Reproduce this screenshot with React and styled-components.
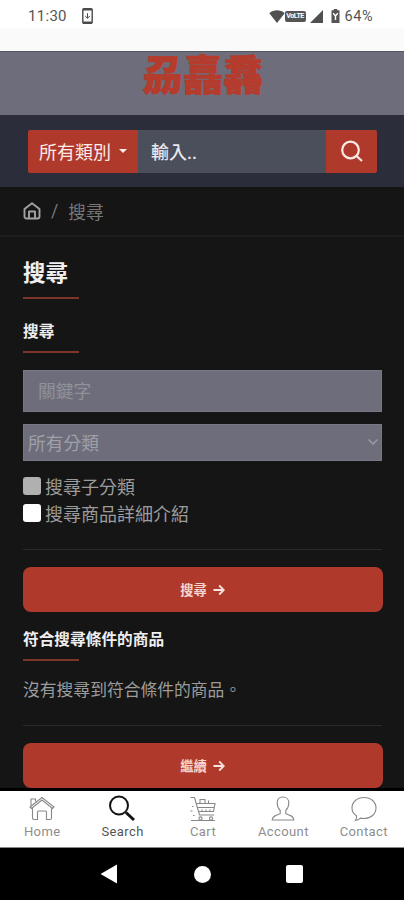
import React from 'react';
import styled, { createGlobalStyle, css } from 'styled-components';

const TABS = [
  { label: 'Home', icon: <HomeTabIcon /> },
  { label: 'Search', icon: <SearchTabIcon />, active: true },
  { label: 'Cart', icon: <CartTabIcon /> },
  { label: 'Account', icon: <AccountTabIcon /> },
  { label: 'Contact', icon: <ContactTabIcon /> },
];

function App() {
  return (
    <Screen>
      <GlobalStyle />
      <StatusBar />
      <TitleStrip />
      <LogoBar>
        <LogoText>刕嚞馫</LogoText>
      </LogoBar>
      <SearchBar>
        <CategoryButton>
          所有類別
          <Caret />
        </CategoryButton>
        <SearchField>輸入..</SearchField>
        <SearchButton aria-label="search">
          <svg width="24" height="24" viewBox="0 0 24 24" fill="none" stroke="#fbe9e6" strokeWidth="2.2">
            <circle cx="10.5" cy="10" r="8.3" />
            <path d="M16.5 16l5.5 5" />
          </svg>
        </SearchButton>
      </SearchBar>
      <Breadcrumb>
        <svg width="18" height="18" viewBox="0 0 18 18" fill="none" stroke="#a2a2a2" strokeWidth="1.9" strokeLinejoin="round">
          <path d="M1.5 7L9 1.2 16.5 7v7.5a2 2 0 0 1-2 2h-11a2 2 0 0 1-2-2z" />
          <path d="M6 16.2V9.5h6v6.7" />
        </svg>
        <Slash>/</Slash>
        <span>搜尋</span>
      </Breadcrumb>
      <Content>
        <PageTitle>搜尋</PageTitle>
        <Underline />
        <SubTitle>搜尋</SubTitle>
        <Underline />
        <KeywordField>關鍵字</KeywordField>
        <SelectField>
          所有分類
          <svg width="12" height="8" viewBox="0 0 12 8" fill="none" stroke="#a0a0a8" strokeWidth="1.3">
            <path d="M1.5 1.5L6 6l4.5-4.5" />
          </svg>
        </SelectField>
        <CheckList>
          <CheckRow>
            <CheckBox $disabled />
            搜尋子分類
          </CheckRow>
          <CheckRow>
            <CheckBox />
            搜尋商品詳細介紹
          </CheckRow>
        </CheckList>
        <Divider />
        <ActionButton>
          搜尋
          <ArrowIcon />
        </ActionButton>
        <SubTitle $result>符合搜尋條件的商品</SubTitle>
        <Underline />
        <Message>沒有搜尋到符合條件的商品。</Message>
        <Divider />
        <ActionButton>
          繼續
          <ArrowIcon />
        </ActionButton>
      </Content>
      <TabBar>
        {TABS.map(({ label, icon, active }) => (
          <Tab key={label} $active={active}>
            {icon}
            <TabLabel>{label}</TabLabel>
          </Tab>
        ))}
      </TabBar>
      <SystemNav>
        <svg width="18" height="20" viewBox="0 0 18 20" fill="#fff">
          <path d="M0.5 10L17 0.5v19z" />
        </svg>
        <NavCircle />
        <NavSquare />
      </SystemNav>
    </Screen>
  );
}

export default App;

function StatusBar() {
  return (
    <StatusRow>
      <Clock>11:30</Clock>
      <svg width="11" height="16" viewBox="0 0 11 16" fill="none" stroke="#4a4a4a">
        <rect x="0.8" y="0.8" width="9.4" height="14.4" rx="1" strokeWidth="1.4" />
        <path d="M1 1.6h9M1 14.4h9" strokeWidth="1.8" />
        <path d="M5.5 5.2v5M3.2 8l2.3 2.3L7.8 8" strokeWidth="1" />
      </svg>
      <StatusRight>
        <svg width="16" height="13" viewBox="0 0 16 13" fill="#505050">
          <path d="M8 13L0.3 3.2C4.8-0.6 11.2-0.6 15.7 3.2z" />
        </svg>
        <VolteBadge>VoLTE</VolteBadge>
        <SignalIcon width="13" height="13" viewBox="0 0 13 13" fill="#505050">
          <path d="M13 0v13H0z" />
        </SignalIcon>
        <svg width="9" height="14" viewBox="0 0 9 14">
          <path d="M2.8 0h3.4v1.3H8.5V14H0.5V1.3h2.3z" fill="#555" />
          <path d="M2.2 4.2L4.5 7l2.3-2.8M4.5 6v5" stroke="#fff" strokeWidth="1.4" fill="none" />
        </svg>
        <Battery>64%</Battery>
      </StatusRight>
    </StatusRow>
  );
}

function ArrowIcon() {
  return (
    <svg width="12" height="12" viewBox="0 0 12 12" fill="none" stroke="#fbe3df" strokeWidth="1.8">
      <path d="M0.5 6h10M6.2 1.5L10.8 6l-4.6 4.5" />
    </svg>
  );
}

function HomeTabIcon() {
  return (
    <TabIcon viewBox="0 0 28 28">
      <path d="M2 12L14 2.5 26 12l-1.5 1.5L14 5 3.5 13.5zM3 10.5V4h4.5v2.5M4.5 13.5V23q0 1.5 1.5 1.5h3.5V17q0-1 1-1h7q1 0 1 1v7.5H22q1.5 0 1.5-1.5v-9.5" />
    </TabIcon>
  );
}

function SearchTabIcon() {
  return (
    <TabIcon viewBox="0 0 28 28" $bold>
      <circle cx="10" cy="10.500" r="9" />
      <path d="M17 17.500l8 7.500" strokeWidth="3" />
    </TabIcon>
  );
}

function CartTabIcon() {
  return (
    <TabIcon viewBox="0 0 28 28">
      <path d="M1.5 2.5h4L10.500 20H25M7 8.500h19l-1.500 8H9.500M8 12.500h17.500" />
      <path d="M11 8.500v-4h5v4M19.500 8.500v-3" />
      <path d="M3 11.500h1.500M1.500 16h2M4 20.500h1.500M2 25.500h24M13 14.500v2M17 14.500v2M21 14.500v2" />
      <circle cx="11.500" cy="23.500" r="1.600" />
      <circle cx="22" cy="23.500" r="1.600" />
    </TabIcon>
  );
}

function AccountTabIcon() {
  return (
    <TabIcon viewBox="0 0 28 28">
      <path d="M14 2c-3.800 0-5.800 2.700-5.800 6 0 3.200 1.200 5.700 3 7.500v3.200c-4 1.300-8 2.300-8 6.300h21.600c0-4-4-5-8-6.300v-3.200c1.800-1.800 3-4.300 3-7.500 0-3.300-2-6-5.800-6z" />
    </TabIcon>
  );
}

function ContactTabIcon() {
  return (
    <TabIcon viewBox="0 0 28 28">
      <path d="M5.500 25.500c1-1.500 1.300-3 1-4.800C3.300 18.800 2 16.200 2 13 2 7 7 2.500 14 2.500S26 7 26 13 21 23.500 14 23.500c-1.200 0-2.400-.1-3.500-.4-1.500 1.500-3 2.200-5 2.400z" />
    </TabIcon>
  );
}

const GlobalStyle = createGlobalStyle`
  * {
    box-sizing: border-box;
  }

  body {
    margin: 0;
    background: #000;
    font-family: 'Roboto', 'Noto Sans CJK TC', sans-serif;
  }

  button {
    border: 0;
    padding: 0;
    font-family: inherit;
  }

  svg {
    display: block;
    flex-shrink: 0;
  }
`;

const flexCenter = css`
  display: flex;
  align-items: center;
  justify-content: center;
`;

const Screen = styled.div`
  display: flex;
  flex-direction: column;
  width: 404px;
  height: 900px;
  overflow: hidden;
  background: #151515;
`;

// Status bar
const StatusRow = styled.div`
  display: flex;
  align-items: center;
  height: 28px;
  padding: 4px 31px 0 28px;
  background: #fff;
  color: #555;
`;

const Clock = styled.span`
  width: 54px;
  font-size: 15px;
  letter-spacing: 0.3px;
`;

const StatusRight = styled.div`
  display: flex;
  align-items: center;
  margin-left: auto;
`;

const VolteBadge = styled.span`
  ${flexCenter};
  width: 21px;
  height: 11px;
  margin-right: 1px;
  border-radius: 2px;
  background: #555;
  color: #fff;
  font-size: 7px;
  font-weight: 700;
  letter-spacing: -0.4px;
`;

const SignalIcon = styled.svg`
  margin: 0 8px 0 3px;
`;

const Battery = styled.span`
  margin-left: 5px;
  font-size: 14.5px;
  letter-spacing: 0.5px;
`;

const TitleStrip = styled.div`
  height: 23px;
  background: #fafafa;
`;

// Header
const LogoBar = styled.header`
  display: flex;
  justify-content: center;
  height: 64px;
  border-top: 1px solid #555562;
  background: #6d6d7b;
`;

const LogoText = styled.div`
  height: 48px;
  padding-left: 2px;
  color: #b53b2c;
  font-size: 40.5px;
  font-weight: 900;
  line-height: 48px;
  -webkit-text-stroke: 0.6px #b53b2c;
`;

const SearchBar = styled.div`
  display: flex;
  height: 72px;
  padding: 15px 27px 14px 28px;
  background: #2c2d3a;
`;

const CategoryButton = styled.button`
  ${flexCenter};
  gap: 8px;
  width: 110px;
  padding-bottom: 2px;
  border-radius: 2px 0 0 2px;
  background: #af3a2c;
  color: #fdebe8;
  font-size: 18px;
`;

const Caret = styled.span`
  border: 4.5px solid transparent;
  border-top-color: #fdebe8;
  border-bottom: 0;
`;

const SearchField = styled.div`
  display: flex;
  flex: 1;
  align-items: center;
  padding: 0 0 2px 13px;
  background: #4b4f5c;
  color: #e8e8ec;
  font-size: 18px;
  font-weight: 500;
`;

const SearchButton = styled.button`
  ${flexCenter};
  width: 51px;
  border-radius: 0 2px 2px 0;
  background: #af3a2c;
`;

const Breadcrumb = styled.nav`
  display: flex;
  align-items: center;
  height: 50px;
  padding-left: 23px;
  border-bottom: 2px solid #1c1c1c;
  color: #777;
  font-size: 17.7px;
`;

const Slash = styled.span`
  margin: 0 10px;
`;

// Search form
const Content = styled.main`
  height: 551px;
  padding: 22px 22px 0 23px;
  overflow: hidden;
  color: #9c9c9c;
`;

const PageTitle = styled.h1`
  margin: 0;
  color: #efefef;
  font-size: 22.5px;
  font-weight: 700;
  line-height: 28px;
`;

const Underline = styled.div`
  width: 56px;
  height: 2px;
  margin-top: 10px;
  background: #7d3529;
`;

const SubTitle = styled.h3`
  height: 22px;
  margin: ${({ $result }) => ($result ? '15px' : '20px')} 0 0;
  color: #efefef;
  font-size: 15.7px;
  font-weight: 700;
  line-height: 25px;
`;

const Field = styled.div`
  display: flex;
  align-items: center;
  width: 359px;
  border: 1px solid #777785;
  background: #6d6d7b;
  font-size: 17.8px;
`;

const KeywordField = styled(Field)`
  height: 42px;
  margin-top: 17px;
  padding: 0 0 2px 14px;
  color: #91919a;
`;

const SelectField = styled(Field)`
  justify-content: space-between;
  height: 37px;
  margin-top: 12px;
  padding: 0 2px 2px 4px;
  color: #a0a0a8;
`;

const CheckList = styled.div`
  margin-top: 11px;
`;

const CheckRow = styled.div`
  display: flex;
  align-items: center;
  gap: 4px;
  height: 27px;
  font-size: 18px;
`;

const CheckBox = styled.span`
  width: 18px;
  height: 18px;
  border-radius: 3px;
  background: ${({ $disabled }) => ($disabled ? '#b0b0b0' : '#fff')};
`;

const Divider = styled.div`
  width: 359px;
  height: 1px;
  margin: 23px 0 17px;
  background: #2a2a2a;
`;

const ActionButton = styled.button`
  ${flexCenter};
  gap: 6px;
  width: 360px;
  height: 45px;
  padding-right: 1px;
  border-radius: 8px;
  background: #af3a2c;
  color: #f6d5d0;
  font-size: 13.3px;
  font-weight: 700;
`;

const Message = styled.p`
  height: 25px;
  margin: 16px 0 0;
  font-size: 16.8px;
  line-height: 26px;
`;

// Bottom tabs
const TabBar = styled.nav`
  display: grid;
  grid-template-columns: repeat(5, 1fr);
  height: 60px;
  padding-left: 2px;
  border-top: 3px solid #000;
  border-bottom: 1px solid #888;
  background: #fff;
`;

const Tab = styled.div`
  display: flex;
  flex-direction: column;
  align-items: center;
  padding-top: 4px;
  color: ${({ $active }) => ($active ? '#555' : '#8e8e8e')};
`;

const TabIcon = styled.svg`
  width: 28px;
  height: 28px;
  fill: none;
  stroke: ${({ $bold }) => ($bold ? '#111' : '#888')};
  stroke-width: ${({ $bold }) => ($bold ? 2 : 1.1)};
`;

const TabLabel = styled.span`
  font-size: 13px;
  line-height: 18px;
  letter-spacing: 0.4px;
`;

const SystemNav = styled.div`
  display: flex;
  align-items: center;
  justify-content: space-between;
  height: 52px;
  padding: 0 101px 0 100px;
  background: #000;
`;

const NavCircle = styled.span`
  width: 17px;
  height: 17px;
  border-radius: 50%;
  background: #fff;
`;

const NavSquare = styled.span`
  width: 17px;
  height: 18px;
  border-radius: 2px;
  background: #fff;
`;
